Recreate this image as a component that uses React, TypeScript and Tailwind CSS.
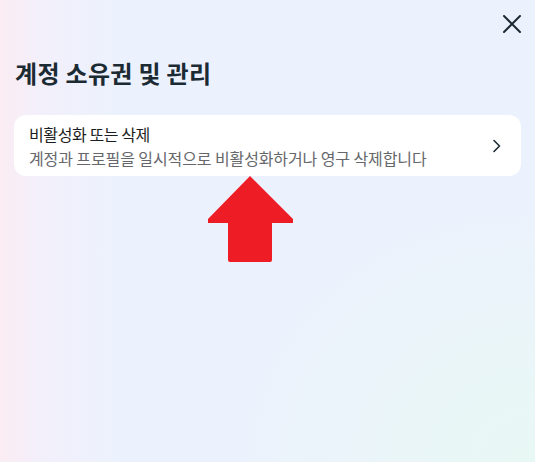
import React from "react";

export default function App() {
  return (
    <div
      className="relative w-[535px] h-[462px] overflow-hidden bg-[#ecf2fd]"
      style={{ fontFamily: '"Noto Sans CJK KR", "Noto Sans", sans-serif' }}
    >
      <div className="absolute inset-0 bg-[linear-gradient(90deg,rgba(252,236,242,0.95)_0%,rgba(246,238,250,0.6)_8%,rgba(236,242,253,0)_22%)]" />
      <div className="absolute inset-0 bg-[radial-gradient(ellipse_at_100%_100%,rgba(232,248,244,1)_0%,rgba(232,248,244,0)_40%)]" />
      <div className="relative flex flex-col px-[14px] pt-[15px]">
        <div className="flex justify-end h-[18px]">
          <svg width="18" height="18" viewBox="0 0 18 18">
            <path d="M1 1L17 17M17 1L1 17" stroke="#1c2b33" strokeWidth="2" strokeLinecap="round" />
          </svg>
        </div>
        <h1 className="mt-[25px] ml-[1px] text-[24px] leading-[30px] font-bold tracking-[0.3px] text-[#1c2b33]">
          계정 소유권 및 관리
        </h1>
        <div className="mt-[27px] flex items-center rounded-[12px] bg-white pl-[15px] pr-[18px] h-[61px]">
          <div className="flex flex-col flex-1">
            <div className="text-[16px] leading-[22px] tracking-[-0.4px] text-[#1c1e21]">비활성화 또는 삭제</div>
            <div className="text-[16px] leading-[22px] tracking-[-0.1px] text-[#65676b] mt-[2px]">
              계정과 프로필을 일시적으로 비활성화하거나 영구 삭제합니다
            </div>
          </div>
          <svg width="12" height="16" viewBox="0 0 12 16">
            <path d="M3 2.5L8.5 8L3 13.5" stroke="#1c2b33" strokeWidth="1.6" fill="none" strokeLinecap="round" strokeLinejoin="round" />
          </svg>
        </div>
        <div className="flex ml-[194px] mt-0">
          <svg width="86" height="86" viewBox="0 0 86 86">
            <path d="M42 0 L85 43 L85 47 L64 47 L64 84 Q64 86 62 86 L22 86 Q20 86 20 84 L20 47 L0 47 L0 43 Z" fill="#ee1c25" />
          </svg>
        </div>
      </div>
    </div>
  );
}
